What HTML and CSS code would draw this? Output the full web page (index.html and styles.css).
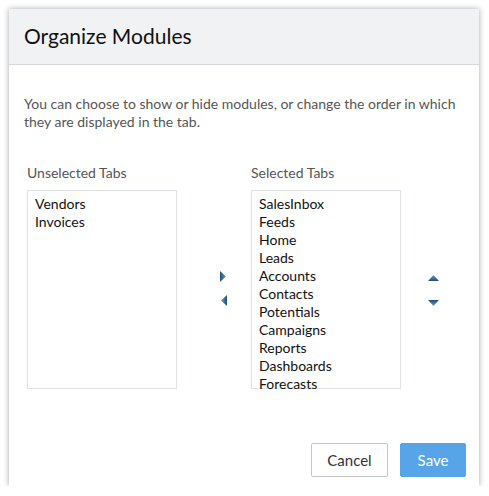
FILE: index.html
```html
<!DOCTYPE html>
<html>
<head>
<meta charset="utf-8">
<link rel="stylesheet" href="styles.css">
</head>
<body>
<div class="dialog">
  <div class="header"><h1 class="title">Organize Modules</h1></div>
  <div class="content">
    <p class="desc">You can choose to show or hide modules, or change the order in which they are displayed in the tab.</p>
    <div class="lists">
      <div class="col">
        <div class="label">Unselected Tabs</div>
        <ul class="box">
          <li>Vendors</li>
          <li>Invoices</li>
        </ul>
      </div>
      <div class="move">
        <svg class="arrow-lr" width="7" height="11" viewBox="0 0 7 11">
          <defs>
            <linearGradient id="gr" x1="0" y1="0" x2="1" y2="0">
              <stop offset="0" stop-color="#1f4e7a"/>
              <stop offset="1" stop-color="#6f9cc4"/>
            </linearGradient>
            <linearGradient id="gl" x1="1" y1="0" x2="0" y2="0">
              <stop offset="0" stop-color="#1f4e7a"/>
              <stop offset="1" stop-color="#6f9cc4"/>
            </linearGradient>
          </defs>
          <polygon points="0,0 6,5.5 0,11" fill="url(#gr)"/>
        </svg>
        <svg class="arrow-lr" width="7" height="11" viewBox="0 0 7 11">
          <polygon points="7,0 1,5.5 7,11" fill="url(#gl)"/>
        </svg>
      </div>
      <div class="col">
        <div class="label">Selected Tabs</div>
        <ul class="box">
          <li>SalesInbox</li>
          <li>Feeds</li>
          <li>Home</li>
          <li>Leads</li>
          <li>Accounts</li>
          <li>Contacts</li>
          <li>Potentials</li>
          <li>Campaigns</li>
          <li>Reports</li>
          <li>Dashboards</li>
          <li>Forecasts</li>
        </ul>
      </div>
      <div class="order">
        <svg class="arrow-ud" width="11" height="6" viewBox="0 0 11 6">
          <defs>
            <linearGradient id="gu" x1="0" y1="0" x2="0" y2="1">
              <stop offset="0" stop-color="#6f9cc4"/>
              <stop offset="1" stop-color="#1f4e7a"/>
            </linearGradient>
            <linearGradient id="gd" x1="0" y1="1" x2="0" y2="0">
              <stop offset="0" stop-color="#6f9cc4"/>
              <stop offset="1" stop-color="#1f4e7a"/>
            </linearGradient>
          </defs>
          <polygon points="0,6 5.5,0 11,6" fill="url(#gu)"/>
        </svg>
        <svg class="arrow-ud" width="11" height="6" viewBox="0 0 11 6">
          <polygon points="0,0 5.5,6 11,0" fill="url(#gd)"/>
        </svg>
      </div>
    </div>
  </div>
  <div class="footer">
    <button class="btn btn-cancel">Cancel</button>
    <button class="btn btn-save">Save</button>
  </div>
</div>
</body>
</html>
```
FILE: styles.css
```css
* { box-sizing: border-box; }
html, body { margin: 0; padding: 0; background: #ffffff; }
body {
  font-family: "Lato", "Liberation Sans", sans-serif;
  color: #222;
}
.dialog {
  margin: 9px 0 0 9px;
  width: 470px;
  height: 477px;
  background: #fff;
  box-shadow: 0 0 6px rgba(0,0,0,0.35);
  display: flex;
  flex-direction: column;
}
.header {
  height: 56px;
  background: #f1f2f4;
  border-bottom: 1px solid #d6d8db;
  padding-left: 15px;
  display: flex;
  align-items: center;
}
.title {
  margin: 0;
  font-size: 21px;
  font-weight: 400;
  color: #111;
  line-height: 24px;
  padding-bottom: 2px;
}
.content {
  flex: 1;
  padding: 30px 15px 0 15px;
}
.desc {
  margin: 0;
  font-size: 14px;
  line-height: 18px;
  color: #555;
}
.lists {
  display: flex;
  margin-top: 33px;
  padding-left: 3px;
}
.col { width: 150px; }
.label {
  font-size: 14px;
  line-height: 18px;
  color: #555;
  margin-bottom: 8px;
}
.box {
  list-style: none;
  margin: 0;
  padding: 4px 7px 0 7px;
  height: 199px;
  border: 1px solid #dfe3e8;
}
.box li {
  font-size: 14px;
  line-height: 18px;
  color: #111;
}
.box li:last-child { line-height: 14px; padding-top: 2px; }
.move {
  width: 74px;
  padding-left: 43px;
  padding-top: 107px;
  display: flex;
  flex-direction: column;
  gap: 13px;
}
.order {
  padding-left: 27px;
  padding-top: 111px;
  display: flex;
  flex-direction: column;
  gap: 19px;
}
.arrow-lr, .arrow-ud { display: block; }
.footer {
  display: flex;
  justify-content: flex-end;
  gap: 12px;
  padding: 0 13px 9px 0;
}
.btn {
  height: 34px;
  font-family: inherit;
  font-size: 15px;
  border-radius: 2px;
  cursor: pointer;
}
.btn-cancel {
  width: 77px;
  background: #fff;
  border: 1px solid #c6c6c6;
  color: #333;
}
.btn-save {
  width: 66px;
  background: #57a5e8;
  border: 1px solid #57a5e8;
  color: #fff;
}
```
